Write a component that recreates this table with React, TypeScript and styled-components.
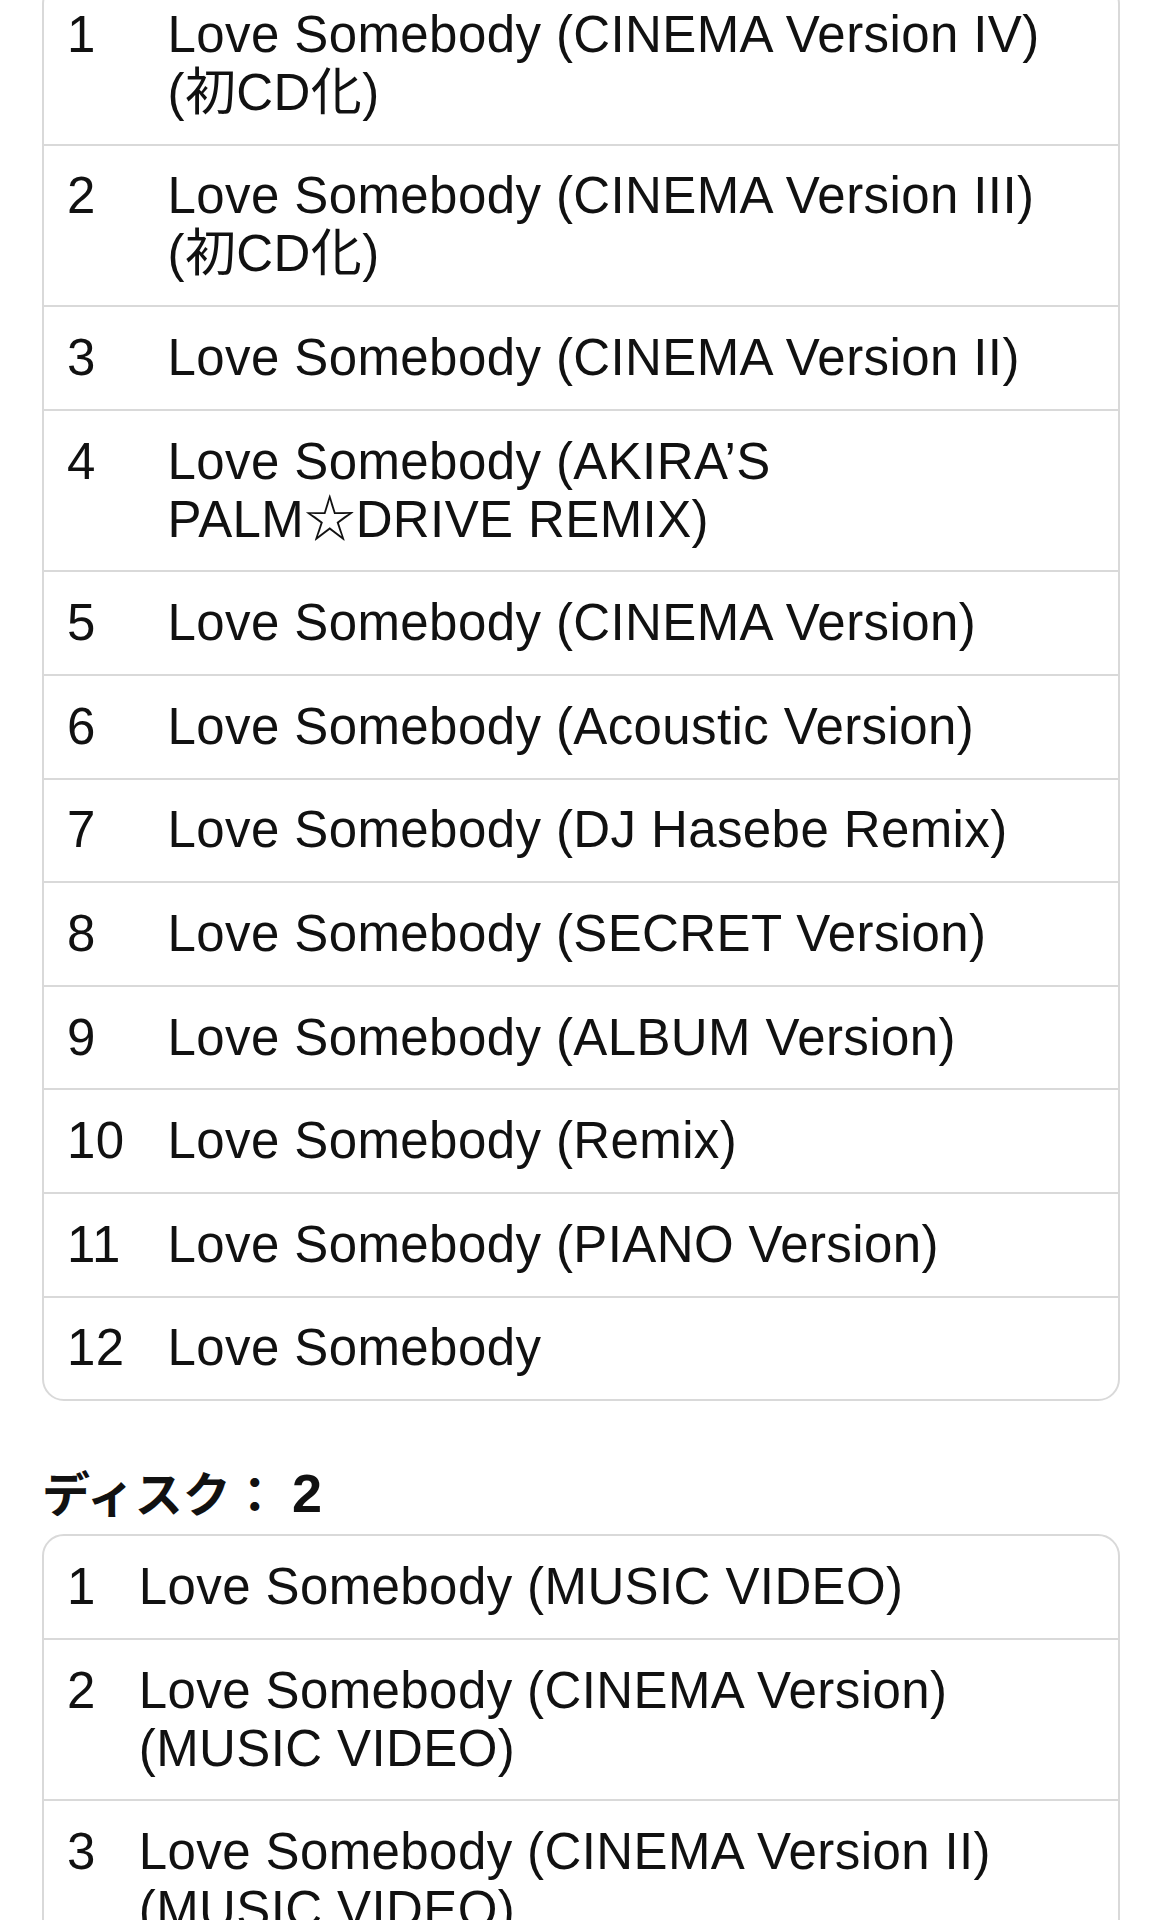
import React from 'react';
import styled, { createGlobalStyle } from 'styled-components';

const GlobalStyle = createGlobalStyle`
  html, body {
    margin: 0;
    padding: 0;
    background: #ffffff;
  }
  body {
    font-family: "Liberation Sans", "Noto Sans CJK JP", sans-serif;
    color: #111111;
    overflow: hidden;
  }
`;

// the page is scrolled a little: top edge of the first card sits above the viewport
const Page = styled.div`
  margin-top: -18px;
  padding: 0 42px;
`;

const Card = styled.div`
  border: 2px solid #d9d9d9;
  border-radius: 22px;
  overflow: hidden;
  background: #fff;
`;

const TrackTable = styled.table`
  width: 100%;
  border-collapse: collapse;
  font-size: 51px;
  line-height: 58px;
  letter-spacing: 0.4px;
`;

const Row = styled.tr`
  & + & {
    border-top: 2px solid #d9d9d9;
  }
`;

const NumCell = styled.td`
  width: 1%;
  white-space: nowrap;
  vertical-align: top;
  padding: 21.8px 19px 21.8px 23px;
`;

const TitleCell = styled.td`
  vertical-align: top;
  padding: 21.8px 24px 21.8px 24px;
`;

const NoWrap = styled.span`
  white-space: nowrap;
`;

const DiscTitle = styled.h2`
  margin: 65px 0 10px;
  font-size: 48px;
  line-height: 56px;
  font-weight: 700;
  color: #111;
`;

const DiscNo = styled.span`
  font-size: 54px;
  line-height: 1;
`;

type Track = { no: number; title: React.ReactNode };

const disc1: Track[] = [
  { no: 1, title: 'Love Somebody (CINEMA Version IV) (初CD化)' },
  { no: 2, title: 'Love Somebody (CINEMA Version III) (初CD化)' },
  { no: 3, title: 'Love Somebody (CINEMA Version II)' },
  {
    no: 4,
    title: (
      <>
        Love Somebody (AKIRA’S <NoWrap>PALM☆DRIVE</NoWrap> REMIX)
      </>
    ),
  },
  { no: 5, title: 'Love Somebody (CINEMA Version)' },
  { no: 6, title: 'Love Somebody (Acoustic Version)' },
  { no: 7, title: 'Love Somebody (DJ Hasebe Remix)' },
  { no: 8, title: 'Love Somebody (SECRET Version)' },
  { no: 9, title: 'Love Somebody (ALBUM Version)' },
  { no: 10, title: 'Love Somebody (Remix)' },
  { no: 11, title: 'Love Somebody (PIANO Version)' },
  { no: 12, title: 'Love Somebody' },
];

const disc2: Track[] = [
  { no: 1, title: 'Love Somebody (MUSIC VIDEO)' },
  { no: 2, title: 'Love Somebody (CINEMA Version) (MUSIC VIDEO)' },
  { no: 3, title: 'Love Somebody (CINEMA Version II) (MUSIC VIDEO)' },
  { no: 4, title: 'Love Somebody (CINEMA Version III) (MUSIC VIDEO)' },
];

const TrackList = ({ tracks }: { tracks: Track[] }) => (
  <Card>
    <TrackTable>
      <tbody>
        {tracks.map((t) => (
          <Row key={t.no}>
            <NumCell>{t.no}</NumCell>
            <TitleCell>{t.title}</TitleCell>
          </Row>
        ))}
      </tbody>
    </TrackTable>
  </Card>
);

const App = () => {
  return (
    <>
      <GlobalStyle />
      <Page>
        <TrackList tracks={disc1} />
        <DiscTitle>
          ディスク： <DiscNo>2</DiscNo>
        </DiscTitle>
        <TrackList tracks={disc2} />
      </Page>
    </>
  );
};

export default App;
